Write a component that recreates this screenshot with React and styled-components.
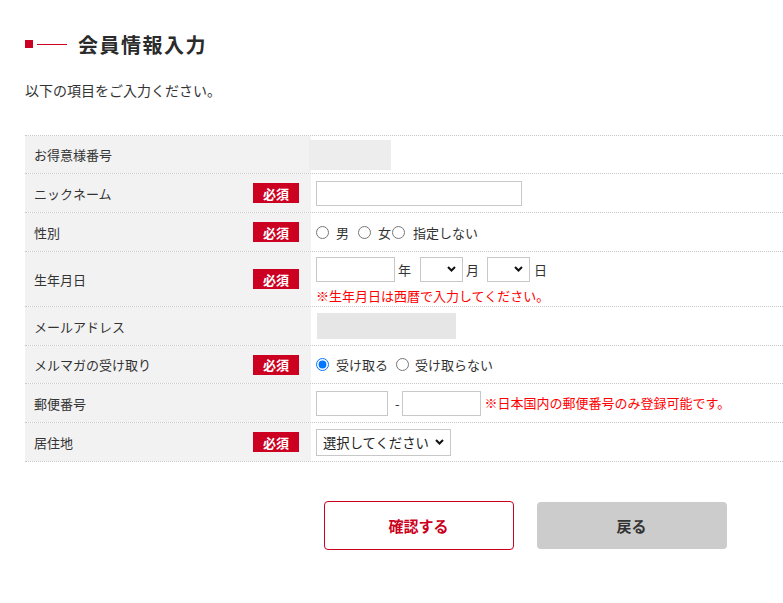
import React from "react";
import styled, { createGlobalStyle } from "styled-components";

const GlobalStyle = createGlobalStyle`
  html, body { margin: 0; padding: 0; background: #fff; }
  body {
    font-family: "Noto Sans CJK JP", "Noto Sans", sans-serif;
    color: #333;
    overflow-x: hidden;
  }
  * { box-sizing: border-box; }
`;

const Page = styled.div`
  width: 1025px;
  padding: 30px 0 40px 25px;
`;

const Heading = styled.h1`
  display: flex;
  align-items: center;
  margin: 0;
  height: 28px;
  font-size: 20px;
  font-weight: 700;
  letter-spacing: 1.5px;
  color: #2b2b2b;
`;

const Square = styled.span`
  width: 8px;
  height: 8px;
  background: #cc0022;
  margin-right: 4px;
`;

const Line = styled.span`
  width: 30px;
  height: 1px;
  background: #cc0022;
  margin-right: 11px;
`;

const Lead = styled.p`
  margin: 22px 0 0;
  font-size: 14px;
  line-height: 20px;
  color: #333;
`;

const Table = styled.div`
  margin-top: 35px;
  width: 1000px;
  border-top: 1px dotted #c8c8c8;
`;

const Row = styled.div`
  display: grid;
  grid-template-columns: 286px 1fr;
  height: ${(p) => p.$h}px;
  border-bottom: 1px dotted #c8c8c8;
`;

const Label = styled.div`
  display: flex;
  align-items: center;
  justify-content: space-between;
  background: #f2f2f2;
  padding: 0 12px 0 9px;
  font-size: 13px;
  color: #333;
`;

const Badge = styled.span`
  display: inline-flex;
  align-items: center;
  justify-content: center;
  width: 46px;
  height: 20px;
  background: #cc0020;
  color: #fff;
  font-size: 13px;
  font-weight: 700;
`;

const Cell = styled.div`
  display: flex;
  flex-direction: ${(p) => (p.$column ? "column" : "row")};
  justify-content: ${(p) => (p.$column ? "center" : "flex-start")};
  align-items: ${(p) => (p.$column ? "flex-start" : "center")};
  padding: ${(p) => p.$pad || "0 5px"};
  font-size: 13px;
`;

const Inline = styled.div`
  display: flex;
  align-items: center;
`;

const Masked = styled.div`
  width: ${(p) => p.$w}px;
  height: ${(p) => p.$hh}px;
  margin-left: ${(p) => p.$ml || 0}px;
  background: ${(p) => p.$bg};
`;

const TextInput = styled.input`
  width: ${(p) => p.$w}px;
  height: 25px;
  border: 1px solid #c8c8c8;
  padding: 0 4px;
  font-size: 13px;
  font-family: inherit;
  outline: none;
  margin: 0;
`;

const SelectWrap = styled.span`
  position: relative;
  display: inline-flex;
`;

const Select = styled.select`
  appearance: none;
  -webkit-appearance: none;
  width: ${(p) => p.$w}px;
  height: ${(p) => p.$h || 25}px;
  border: 1px solid #c8c8c8;
  border-radius: 0;
  background: #fff;
  padding: 0 20px 0 6px;
  font-size: 13.33px;
  font-family: inherit;
  color: #222;
  margin: 0;
`;

const Chevron = styled.svg`
  position: absolute;
  right: 7px;
  top: 50%;
  margin-top: -3px;
  width: 9px;
  height: 6px;
  pointer-events: none;
`;

const Unit = styled.span`
  margin: 0 ${(p) => p.$mr ?? 9}px 0 ${(p) => p.$ml ?? 3}px;
  font-size: 13px;
`;

const Note = styled.span`
  color: #ff0000;
  font-size: 13px;
  line-height: 18px;
  white-space: nowrap;
  margin-top: ${(p) => p.$mt || 0}px;
  margin-left: ${(p) => p.$ml || 0}px;
`;

const RadioLabel = styled.label`
  display: inline-flex;
  align-items: center;
  gap: ${(p) => p.$gap ?? 7}px;
  margin-right: ${(p) => p.$mr || 0}px;
  font-size: 13px;
  color: #333;
`;

const Radio = styled.input`
  width: 13px;
  height: 13px;
  margin: 0;
  accent-color: #0075ff;
`;

const Buttons = styled.div`
  display: flex;
  justify-content: center;
  align-items: center;
  gap: 23px;
  width: 1000px;
  margin-top: 39px;
`;

const Button = styled.button`
  width: 190px;
  height: ${(p) => (p.$primary ? 49 : 47)}px;
  border-radius: 4px;
  border: ${(p) => (p.$primary ? "1px solid #cc0020" : "none")};
  background: ${(p) => (p.$primary ? "#fff" : "#cccccc")};
  color: ${(p) => (p.$primary ? "#cc0020" : "#333")};
  font-family: inherit;
  font-size: 15px;
  font-weight: 700;
  cursor: pointer;
`;

const Arrow = () => (
  <Chevron viewBox="0 0 9 6">
    <polyline points="1,1 4.5,4.5 8,1" fill="none" stroke="#111" strokeWidth="2" />
  </Chevron>
);

const Dropdown = ({ w, h, children }) => (
  <SelectWrap>
    <Select $w={w} $h={h} defaultValue="">
      {children}
    </Select>
    <Arrow />
  </SelectWrap>
);

export default function App() {
  return (
    <>
      <GlobalStyle />
      <Page>
        <Heading>
          <Square />
          <Line />
          会員情報入力
        </Heading>
        <Lead>以下の項目をご入力ください。</Lead>

        <Table>
          <Row $h={38}>
            <Label>お得意様番号</Label>
            <Cell $pad="0 5px 0 0">
              <Masked $w={82} $hh={30} $ml={-2} $bg="#ededed" />
            </Cell>
          </Row>

          <Row $h={39}>
            <Label>
              ニックネーム<Badge>必須</Badge>
            </Label>
            <Cell>
              <TextInput type="text" $w={206} />
            </Cell>
          </Row>

          <Row $h={39}>
            <Label>
              性別<Badge>必須</Badge>
            </Label>
            <Cell>
              <Inline>
                <RadioLabel $mr={9}>
                  <Radio type="radio" name="sex" />男
                </RadioLabel>
                <RadioLabel $mr={1}>
                  <Radio type="radio" name="sex" />女
                </RadioLabel>
                <RadioLabel $gap={8}>
                  <Radio type="radio" name="sex" />指定しない
                </RadioLabel>
              </Inline>
            </Cell>
          </Row>

          <Row $h={55}>
            <Label>
              生年月日<Badge>必須</Badge>
            </Label>
            <Cell $column $pad="3px 5px 0">
              <Inline>
                <TextInput type="text" $w={79} />
                <Unit>年</Unit>
                <Dropdown w={43}>
                  <option value=""></option>
                </Dropdown>
                <Unit $mr={8}>月</Unit>
                <Dropdown w={43}>
                  <option value=""></option>
                </Dropdown>
                <Unit $ml={4}>日</Unit>
              </Inline>
              <Note $mt={5}>※生年月日は西暦で入力してください。</Note>
            </Cell>
          </Row>

          <Row $h={39}>
            <Label>メールアドレス</Label>
            <Cell>
              <Masked $w={139} $hh={26} $ml={1} $bg="#e6e6e6" />
            </Cell>
          </Row>

          <Row $h={38}>
            <Label>
              メルマガの受け取り<Badge>必須</Badge>
            </Label>
            <Cell>
              <Inline>
                <RadioLabel $mr={8}>
                  <Radio type="radio" name="mag" defaultChecked />受け取る
                </RadioLabel>
                <RadioLabel $gap={6}>
                  <Radio type="radio" name="mag" />受け取らない
                </RadioLabel>
              </Inline>
            </Cell>
          </Row>

          <Row $h={39}>
            <Label>郵便番号</Label>
            <Cell>
              <Inline>
                <TextInput type="text" $w={72} />
                <Unit $ml={7} $mr={2}>-</Unit>
                <TextInput type="text" $w={79} />
                <Note $ml={4}>※日本国内の郵便番号のみ登録可能です。</Note>
              </Inline>
            </Cell>
          </Row>

          <Row $h={39}>
            <Label>
              居住地<Badge>必須</Badge>
            </Label>
            <Cell>
              <Dropdown w={135} h={27}>
                <option value="">選択してください</option>
              </Dropdown>
            </Cell>
          </Row>
        </Table>

        <Buttons>
          <Button $primary>確認する</Button>
          <Button>戻る</Button>
        </Buttons>
      </Page>
    </>
  );
}
